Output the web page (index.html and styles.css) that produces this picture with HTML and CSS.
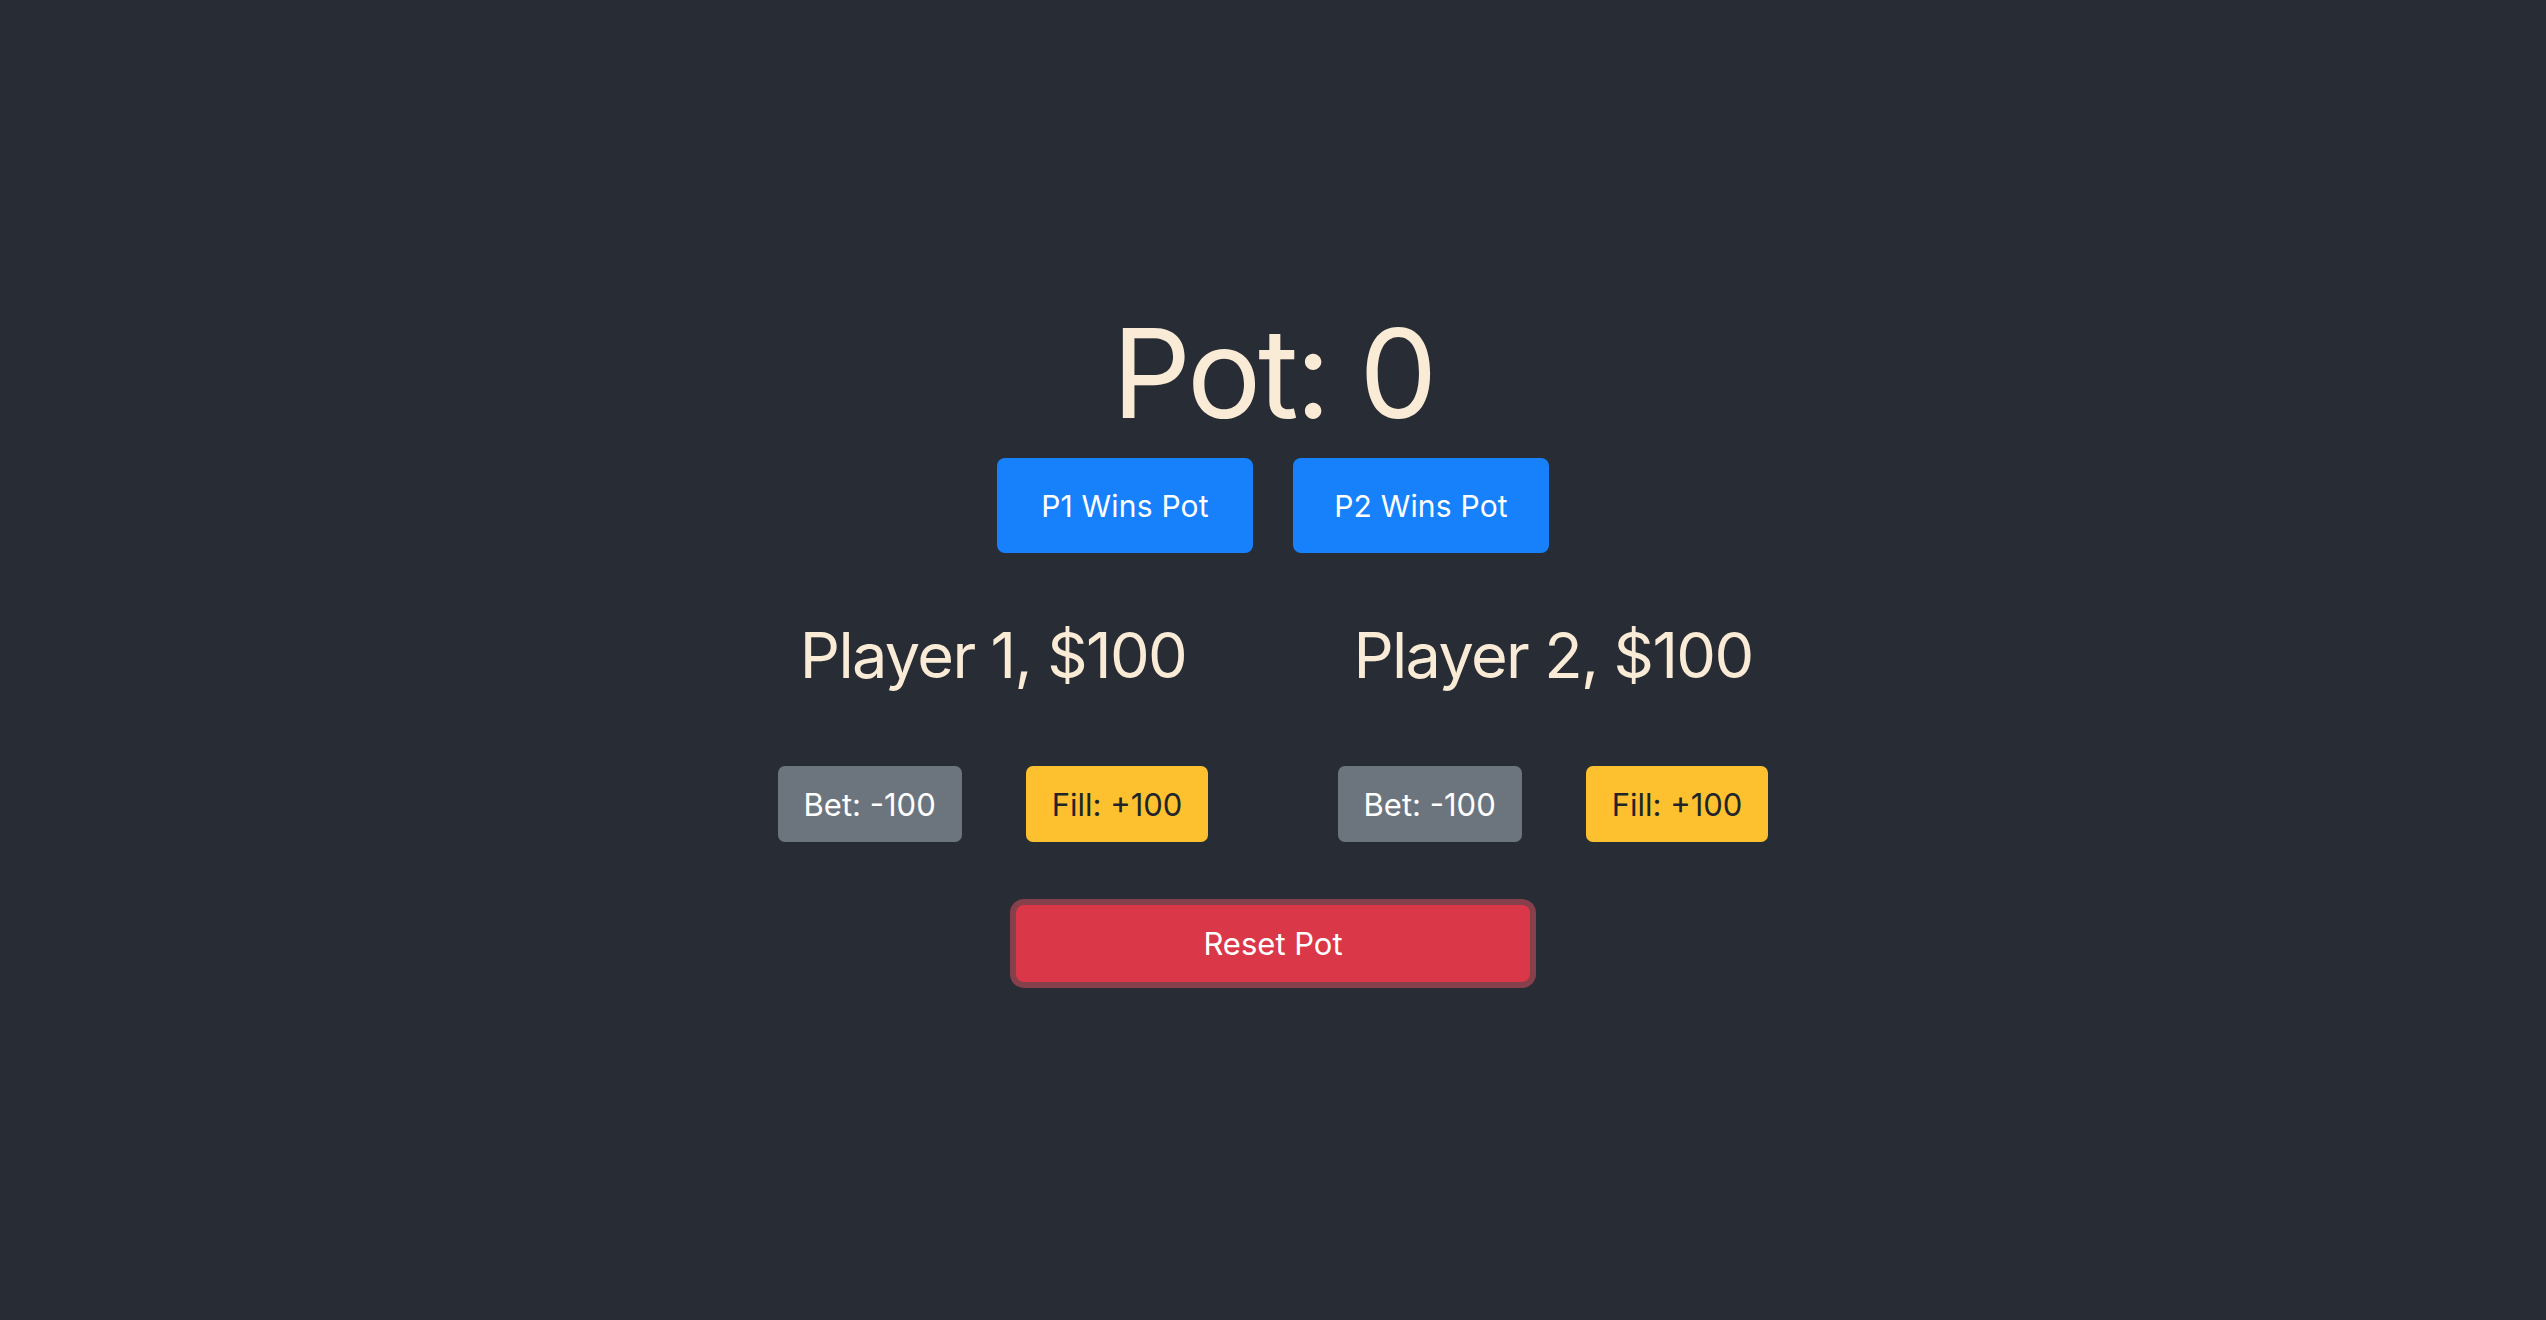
FILE: index.html
```html
<!DOCTYPE html>
<html lang="en">
<head>
<meta charset="utf-8">
<title>Pot</title>
<link rel="stylesheet" href="styles.css">
</head>
<body>
<main class="app">
  <h1 class="pot">Pot: 0</h1>
  <div class="wins">
    <button class="btn btn-primary btn-win">P1 Wins Pot</button>
    <button class="btn btn-primary btn-win">P2 Wins Pot</button>
  </div>
  <div class="players">
    <section class="player">
      <h2 class="player-name">Player 1, $100</h2>
      <div class="actions">
        <button class="btn btn-secondary btn-small">Bet: -100</button>
        <button class="btn btn-warning btn-small">Fill: +100</button>
      </div>
    </section>
    <section class="player">
      <h2 class="player-name">Player 2, $100</h2>
      <div class="actions">
        <button class="btn btn-secondary btn-small">Bet: -100</button>
        <button class="btn btn-warning btn-small">Fill: +100</button>
      </div>
    </section>
  </div>
  <button class="btn btn-danger btn-reset">Reset Pot</button>
</main>
</body>
</html>
```

FILE: styles.css
```css
html, body {
  margin: 0;
  padding: 0;
}

body {
  background: #282c34;
  color: #faebd7;
  font-family: Inter, "Noto Sans", sans-serif;
  min-height: 100vh;
}

.app {
  display: flex;
  flex-direction: column;
  align-items: center;
  padding-top: 298px;
}

.pot {
  margin: 0;
  font-size: 124px;
  line-height: 150px;
  font-weight: 400;
  letter-spacing: -0.027em;
}

.wins {
  display: flex;
  gap: 40px;
  margin-top: 10px;
}

.btn {
  font-family: Inter, "Noto Sans", sans-serif;
  border: none;
  display: flex;
  align-items: center;
  justify-content: center;
  font-size: 30px;
  font-weight: 400;
  cursor: pointer;
  padding: 0;
  color: #fff;
}

.btn-win {
  width: 256px;
  height: 95px;
  border-radius: 8px;
  letter-spacing: 0.2px;
}

.btn-primary {
  background: #1681fb;
}

.players {
  display: grid;
  grid-template-columns: 560px 560px;
  margin-top: 64px;
}

.player {
  display: flex;
  flex-direction: column;
  align-items: center;
}

.player-name {
  margin: 0;
  font-size: 63px;
  line-height: 76px;
  font-weight: 400;
  letter-spacing: -0.026em;
}

.actions {
  display: flex;
  gap: 64px;
  margin-top: 73px;
}

.btn-small {
  height: 76px;
  padding: 0 26px;
  border-radius: 7px;
  font-size: 31px;
}

.btn-secondary {
  background: #6c757e;
  color: #fff;
}

.btn-warning {
  background: #fdc02f;
  color: #212529;
}

.btn-reset {
  width: 514px;
  height: 77px;
  margin-top: 63px;
  border-radius: 8px;
  font-size: 31px;
  box-shadow: 0 0 0 6px rgba(225, 83, 97, 0.5);
}

.btn-danger {
  background: #da3748;
  color: #fff;
}
```
